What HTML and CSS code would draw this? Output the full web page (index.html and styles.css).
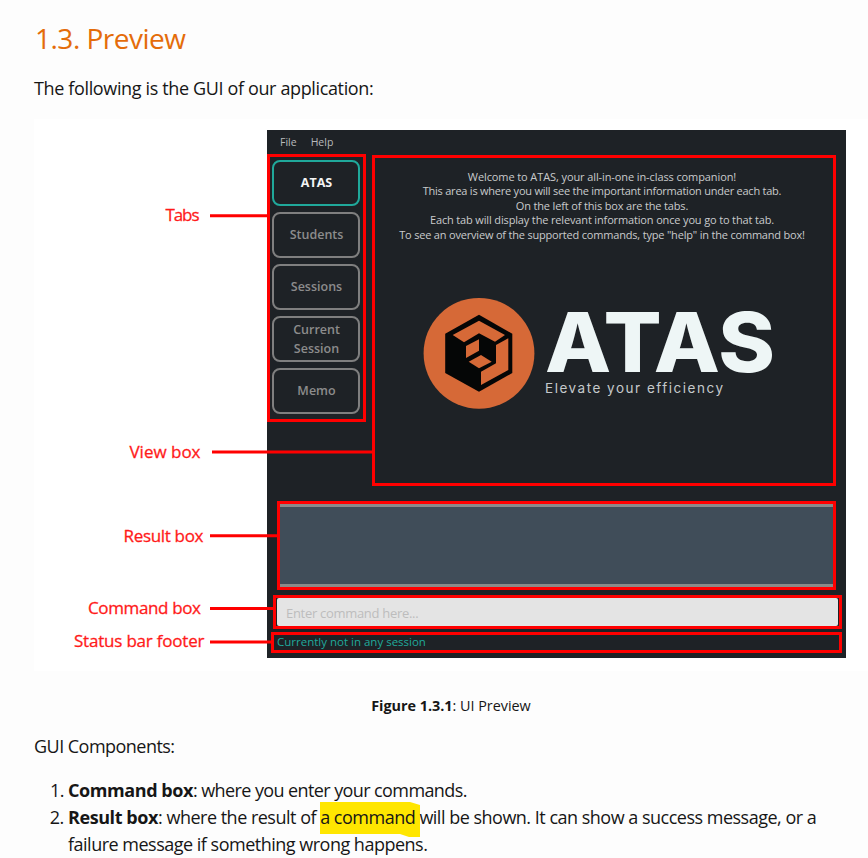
FILE: index.html
```html
<!DOCTYPE html>
<html lang="en">
<head>
<meta charset="utf-8">
<title>Preview</title>
<link rel="stylesheet" href="styles.css">
</head>
<body>
<main class="page">
  <h2 class="heading">1.3. Preview</h2>
  <p class="intro">The following is the GUI of our application:</p>

  <figure class="shot">
    <div class="window">
      <nav class="menu"><span>File</span><span>Help</span></nav>
      <div class="body">
        <div class="tabs">
          <div class="tab active">ATAS</div>
          <div class="tab">Students</div>
          <div class="tab">Sessions</div>
          <div class="tab">Current<br>Session</div>
          <div class="tab">Memo</div>
        </div>
        <section class="view">
          <p class="welcome">
            <span class="w1">Welcome to ATAS, your all-in-one in-class companion!</span>
            <span class="w2">This area is where you will see the important information under each tab.</span>
            <span class="w3">On the left of this box are the tabs.</span>
            <span class="w4">Each tab will display the relevant information once you go to that tab.</span>
            <span class="w5">To see an overview of the supported commands, type "help" in the command box!</span>
          </p>
          <svg class="logo" width="356" height="116" viewBox="421 295 356 116">
            <circle cx="479" cy="353.3" r="55.4" fill="#d66937"/>
            <path fill="#050606" d="M479 314.7L512.3 333.7V373L479 391.7L445.2 373V333.7Z"/>
            <g fill="#d66937">
              <path d="M479 320.7L505 335L495 341.7L479 333.3L464 342.3L452.7 335Z"/>
              <path d="M508.3 338.3V370L481 385V371.7L496 363.3V345Z"/>
              <path d="M479 339.3V350.7L466 358V346Z"/>
              <path d="M481 355L491.7 361.7L479 368.3L468.7 361.7Z"/>
            </g>
            <text class="brand" x="545" y="372" textLength="230" lengthAdjust="spacingAndGlyphs">ATAS</text>
            <text class="slogan" x="545" y="392.5" textLength="178" lengthAdjust="spacing">Elevate your efficiency</text>
          </svg>
        </section>
      </div>
      <div class="result"></div>
      <div class="command"><div class="field">Enter command here...</div></div>
      <div class="status">Currently not in any session</div>
    </div>
    <svg class="callouts" width="834" height="552" viewBox="34 119 834 552">
      <path d="M210 215.7H268M212 452H373M210 535.8H279M210 608.4H274M210 642H272" stroke="#f00" stroke-width="3"/>
      <g class="labels">
        <text x="165.500" y="221" textLength="34">Tabs</text>
        <text x="129.500" y="457.500" textLength="71">View box</text>
        <text x="123.500" y="541.500" textLength="80">Result box</text>
        <text x="88" y="614" textLength="113">Command box</text>
        <text x="74" y="647" textLength="130.500">Status bar footer</text>
      </g>
    </svg>
  </figure>

  <p class="caption"><b>Figure 1.3.1</b>: UI Preview</p>
  <p class="components">GUI Components:</p>
  <ol class="list">
    <li><b>Command box</b>: where you enter your commands.</li>
    <li><b>Result box</b>: where the result of <span class="mark">a command<svg viewBox="0 0 100 35" width="100" height="35"><path d="M0 0H90L100 3V35H89L80 32H0Z" fill="#ffe600"/></svg></span> will be shown. It can show a success message, or a failure message if something wrong happens.</li>
  </ol>
</main>
</body>
</html>
```
FILE: styles.css
```css
* { box-sizing: border-box; }
body {
  margin: 0;
  height: 858px;
  overflow: hidden;
  background: #fdfdfd;
  color: #161616;
  font-family: "Open Sans", "Noto Sans", sans-serif;
  font-size: 18px;
  font-weight: 400;
  line-height: 27px;
}
b { font-weight: 700; }
.page { padding-left: 34px; }
p, h2, figure, ol { margin: 0; }
.heading {
  padding: 19px 0 0 1px;
  height: 75px;
  font-size: 28px;
  line-height: 38px;
  font-weight: 400;
  color: #e46c0a;
  letter-spacing: -0.5px;
}
.intro { height: 44px; letter-spacing: -0.36px; }
.shot {
  position: relative;
  height: 552px;
  padding: 11px 0 0 233px;
  background: #fff;
}
.callouts { position: absolute; left: 0; top: 0; }
.labels { font-size: 17px; font-weight: 400; fill: #ff1a1a; stroke: #ff1a1a; stroke-width: 0.3px; }
.window {
  width: 579px;
  height: 528px;
  background: #1e2226;
  font-size: 11px;
  font-weight: 400;
}
.menu {
  display: flex;
  gap: 14px;
  height: 24px;
  padding-left: 13px;
  color: #b8babb;
  font-size: 10.5px;
  line-height: 24px;
}
.body { display: flex; gap: 6px; height: 347px; align-items: flex-start; }
.tabs {
  display: flex;
  flex-direction: column;
  gap: 6px;
  width: 99px;
  height: 268px;
  padding: 2.600px 3px 0 2px;
  border: 3px solid #f00;
}
.tab {
  display: flex;
  align-items: center;
  justify-content: center;
  width: 88px;
  height: 46px;
  padding-left: 1px;
  border: 2px solid #7f7f7f;
  border-radius: 8px;
  color: #8c8c8c;
  font-size: 12.5px;
  font-weight: 600;
  line-height: 19px;
  text-align: center;
}
.tab.active { border-color: #20a99b; color: #f4f4f4; font-weight: 700; }
.view {
  width: 464px;
  height: 331px;
  margin-top: 1px;
  border: 3px solid #f00;
}
.welcome {
  padding: 12px 4px 0 0;
  height: 137px;
  font-size: 11px;
  line-height: 14.400px;
  color: #c9cbcc;
  text-align: center;
}
.welcome span { display: block; white-space: nowrap; }
.w1 { letter-spacing: -0.1px; }
.w2 { letter-spacing: -0.23px; }
.w3 { letter-spacing: -0.16px; }
.w4 { letter-spacing: -0.15px; }
.w5 { letter-spacing: -0.19px; }
.logo { display: block; margin-left: 46px; overflow: visible; }
.brand { font-family: Inter, sans-serif; font-weight: 800; font-size: 82px; fill: #eef6f6; }
.slogan { font-family: Inter, sans-serif; font-size: 13.500px; fill: #c5c9cb; }
.result {
  width: 559px;
  height: 89px;
  margin-left: 10px;
  border: 3px solid #f00;
  background: linear-gradient(#8a8a8a 3px, #404d59 3px, #404d59 80px, #8a8a8a 80px);
}
.command {
  width: 569px;
  height: 34px;
  margin: 5px 0 0 6px;
  padding: 0 1px;
  border: 3px solid #f00;
}
.field {
  height: 28px;
  padding-left: 9px;
  border-radius: 2px;
  background: #e4e4e4;
  color: #bdbdbd;
  font-size: 13px;
  letter-spacing: -0.3px;
  line-height: 30px;
}
.status {
  width: 571px;
  height: 21px;
  margin: 3px 0 0 4px;
  padding-left: 3px;
  border: 3px solid #f00;
  color: #20a99b;
  font-size: 11.500px;
  line-height: 14px;
}
.caption {
  height: 62px;
  padding-top: 21px;
  font-size: 14.400px;
  text-align: center;
  letter-spacing: -0.02px;
}
.components { height: 44px; letter-spacing: -0.53px; }
.list { padding: 0 34px; letter-spacing: -0.53px; }
.list li:first-child { letter-spacing: -0.6px; }
.list b { letter-spacing: -0.42px; }
.list li + li { letter-spacing: -0.5px; }
.mark { position: relative; }
.mark svg { position: absolute; left: 0; top: -3px; z-index: -1; }
```
